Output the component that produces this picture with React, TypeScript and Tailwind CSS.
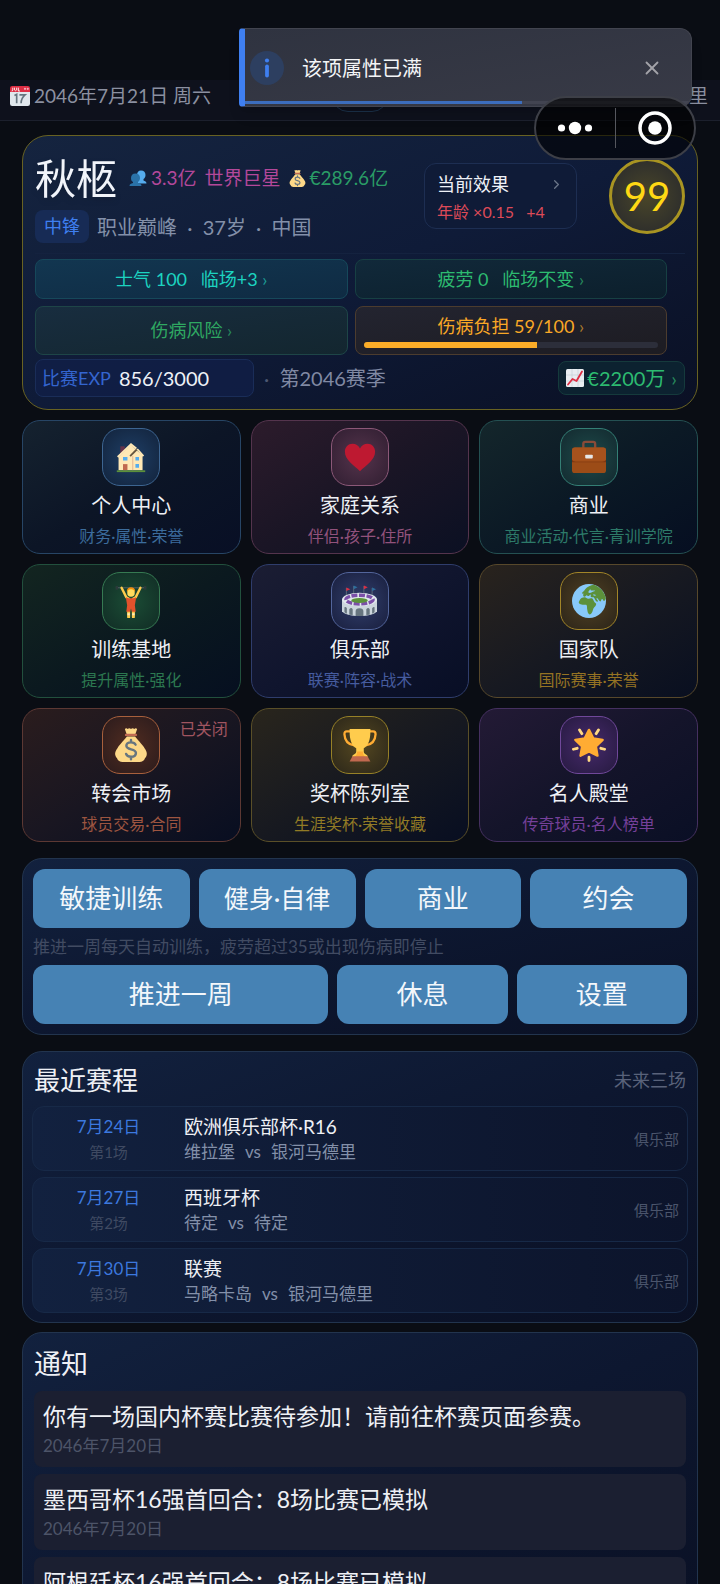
import { ReactNode } from 'react';
import { ChevronRight, X } from 'lucide-react';

function Calendar() {
  return (
    <svg viewBox="0 0 36 36" className="size-5 shrink-0" aria-hidden="true">
      <path fill="#e0e7ec" d="M36 32a4 4 0 0 1-4 4H4a4 4 0 0 1-4-4V9h36z" />
      <path fill="#dd2e44" d="M0 11V4a4 4 0 0 1 4-4h28a4 4 0 0 1 4 4v7z" />
      <circle cx="27" cy="5" r="2" fill="#f4abba" />
      <circle cx="32" cy="5" r="2" fill="#f4abba" />
      <path fill="none" stroke="#fff" strokeWidth="1.6" d="M5 3v4q0 2-2 2M8 3v4q2 3 4 0V3M15 3v6h3" />
      <path fill="none" stroke="#66757f" strokeWidth="3" d="M8 17l4-2v16M17 16h10q-7 6-7 15" />
    </svg>
  );
}

function People() {
  return (
    <svg viewBox="0 0 36 36" className="size-[18px] shrink-0" aria-hidden="true">
      <path fill="#55acee" d="M24 3c6 0 9 4 9 9 0 4-2 7-4 8v3c3 1 6 2 6 6H15c0-4 3-5 5-6v-3c-3-1-4-4-4-8 0-5 3-9 8-9z" />
      <path fill="#2a72a8" d="M13 9c6 0 9 4 9 9 0 4-2 6-4 8v2c4 1 7 2 7 6H1c0-4 3-5 7-6v-2c-3-2-4-4-4-8 0-5 3-9 9-9z" />
    </svg>
  );
}

function MoneyBag({ className }: { className: string }) {
  return (
    <svg viewBox="0 0 36 36" className={className} aria-hidden="true">
      <path fill="#fdd888" d="M31.9 20.6c-1.6-2.6-8-9.6-9.5-11.6H13.6c-1.5 2-7.900 9-9.500 11.600-1.600 2.600-3.600 5-2.600 8.400.5 1.700 1.200 2 1.700 3 1 2.600 3 4 6 4h17.600c3 0 5-1.400 6-4 .5-1 1.200-1.300 1.700-3 1-3.400-1-5.800-2.600-8.400z" />
      <path fill="#fdd888" d="M11.500 1q1.500-1.500 3 0 1.700-1.500 3.500 0 1.700-1.500 3.500 0 1.500-1.500 3 0L22.500 7h-9z" />
      <path fill="#bf6952" d="M13 6h10q1.500 0 1.500 1.300T23 8.600H13q-1.500 0-1.500-1.300T13 6z" />
      <path fill="none" stroke="#67757f" strokeWidth="2.600" strokeLinecap="round" d="M22.800 17.600c-.7-1.700-2.600-2.400-4.800-2.400-2.900 0-4.900 1.400-4.900 3.700 0 5 10.100 2.400 10.100 7.600 0 2.500-2.200 4-5.200 4-2.500 0-4.600-1-5.200-3M18 12.600v2.400M18 30.800V33" />
    </svg>
  );
}

function ChartUp() {
  return (
    <svg viewBox="0 0 36 36" className="size-[18px] shrink-0" aria-hidden="true">
      <rect width="36" height="36" rx="3" fill="#e8edf1" />
      <path fill="none" stroke="#b9c6cf" d="M0 12h36M0 24h36M12 0v36M24 0v36" />
      <path fill="none" stroke="#dd2e44" strokeWidth="3.600" strokeLinecap="round" strokeLinejoin="round" d="M4 31l9-11 8 4L32 5" />
    </svg>
  );
}

function House() {
  return (
    <svg viewBox="0 0 36 36" className="size-[32px]" aria-hidden="true">
      <path fill="#66334b" d="M6 6h5v9H6z" />
      <path fill="#ffe8b6" d="M4 18 18 4l6 6 7 6v17H4z" />
      <path fill="none" stroke="#d99e82" strokeWidth=".8" d="M20 17v16" />
      <path fill="none" stroke="#66553f" strokeWidth="2" d="m17 17 8-8" />
      <path fill="none" stroke="#ffe8b6" strokeWidth="2" d="m25 9 7 8M3 18 18 3.500l6 5" />
      <path fill="#55acee" d="M9 18h5v4H9zM23 18h4v4h-4zM23 26h4v4h-4z" />
      <path fill="#c1694f" d="M9 26h5v7H9z" />
      <path fill="#5c913b" d="M2 33h32v2H2z" />
    </svg>
  );
}

function Heart() {
  return (
    <svg viewBox="0 0 36 36" className="size-[34px]" aria-hidden="true">
      <path fill="#be1931" d="M34 12.500C34 7.500 30.500 4 26 4c-3.600 0-6.500 2-8 5-1.500-3-4.400-5-8-5-4.500 0-8 3.500-8 8.500C2 21 12 27.500 18 33c6-5.500 16-12 16-20.500z" />
    </svg>
  );
}

function Briefcase() {
  return (
    <svg viewBox="0 0 36 36" className="size-[34px]" aria-hidden="true">
      <path fill="none" stroke="#8a4b38" strokeWidth="2.500" d="M12 9V4q0-2 2-2h8.500q2 0 2 2v5" />
      <rect y="8" width="36" height="27" rx="3" fill="#9c4c17" />
      <path fill="#7c3510" d="M0 21q1 2 4 2h28q3 0 4-2v2.500H0z" />
      <path fill="#a6521d" d="M0 11q0-3 3-3h30q3 0 3 3v9q0 2-4 2H4q-4 0-4-2z" />
      <rect x="14" y="15.500" width="8" height="4" rx="1" fill="#e6e7e8" />
    </svg>
  );
}

function Lifter() {
  return (
    <svg viewBox="0 0 36 36" className="size-[34px]" aria-hidden="true">
      <path stroke="#566069" strokeWidth="1" d="M2 4h32" />
      <path stroke="#2b3a3a" strokeWidth="2.500" d="M3 2v4M33 2v4" />
      <path fill="none" stroke="#ffcc4d" strokeWidth="2.600" strokeLinecap="round" strokeLinejoin="round" d="m8 4 5 10 3 2M28 4l-5 10-3 2" />
      <path fill="#f4900c" d="M13.500 8c0-3 2-4.500 4.500-4.500s4.500 1.500 4.500 4.500z" />
      <circle cx="18" cy="9.500" r="4" fill="#ffdc5d" />
      <path fill="none" stroke="#ffcc4d" strokeWidth="3.200" strokeLinecap="round" d="M15.500 27v8M20.500 27v8" />
      <path fill="#e2522c" d="m12.500 14 3 1h5l3-1-1.500 9h-8zM14 22h8l1 7.500h-4L18 26l-1 3.500h-4z" />
      <path stroke="#ffe8b6" strokeWidth="2.600" d="M15.500 31v2M20.500 31v2" />
    </svg>
  );
}

function Stadium() {
  return (
    <svg viewBox="0 0 36 36" className="size-[35px]" aria-hidden="true">
      <path stroke="#66757f" strokeWidth=".8" d="M4.500 4v9M12 2v9M22.500 2v9M31 4v9" />
      <path fill="#dd2e44" d="m4.500 3.500 4 1.800-4 2zM22.500 1.500l4 1.800-4 2z" />
      <path fill="#2d6f9e" d="m12 1.500 4 1.800-4 2zM31 3.500l4 1.800-4 2z" />
      <path fill="#ccd6dd" d="M0 16v12c2 3 9 5 18 5s16-2 18-5V16z" />
      <ellipse cx="18" cy="16" rx="18" ry="7" fill="#e1e8ed" />
      <ellipse cx="18" cy="16" rx="14" ry="4.500" fill="none" stroke="#7b4fa8" strokeWidth="3.500" strokeDasharray="6 1.600" />
      <ellipse cx="18" cy="17" rx="8.500" ry="2.500" fill="#5c913b" />
      <path fill="#67757f" d="M14 33v-5q0-3 4-3t4 3v5zM7.500 31.500V26q2-2.500 3.500 0v6zM25 32v-6q2-2.500 3.500 0v5.500zM2.500 29v-5q1.500-1 2.500 1v5.500zM31 30.500V25q1.500-2 2.500-1v5z" />
    </svg>
  );
}

function Globe() {
  return (
    <svg viewBox="0 0 36 36" className="size-[34px]" aria-hidden="true">
      <circle cx="18" cy="18" r="18" fill="#88c9f9" />
      <path fill="#5c913b" d="M8 17.500c1-2.500 3-3.500 5.500-3.500 1.500 0 2 1.600 4 1.500 1.400 0 2.600-.8 4.400.2 1.200 1.800 1.200 3.500 3.600 5 .6 2.300-2.300 3.800-3.200 6.300-.6 2.300-1.600 5.200-3.600 5.300-2.200-.6-2.200-3.700-2.700-5.700-.2-1.600.3-3.600-1-4.600-2.200-.6-5.500.9-7.500-1.500-.6-.900-.2-2 .5-3zM10.500 10c.5-2 2.500-2.500 3.500-4.500C16 3 20 1 23 .8 30 3 34.500 9 35.800 15c-.3 1.500-1.500 3-2 3-1-.5-1-2-2-2-1.300.4-.5 2.500-1.800 2.500-1.800-.5-2-3-3.500-3.700-1 .2-.4 1.600.5 2.400 1 .8.500 1.400-.5 1.500-1.800-.5-2-3-3.300-4.500-1.200-.3-2.300.2-3.300-.6-.4-.8.5-1.800-.4-2.400-.9 0-.8 1.500-2 1.500-1 .2-1.200-1-2.200-.8-.9.600-1 1.500-2.200 1.500-1.500-.3-1.800-2.200-.6-3z" />
      <path fill="#88c9f9" d="M17 8.500c1-.5 1.300-2.500 2.500-3l.5 1.500c1.800 0 3-.5 4.500 0-.5 1.500-3 1-4 2-1 .7-2.500.8-3.500-.5zM22 11.500c1-.8 3-.5 3.500.5-1 .8-2.500.5-3.500-.5z" />
    </svg>
  );
}

function Trophy() {
  return (
    <svg viewBox="0 0 36 36" className="size-[34px]" aria-hidden="true">
      <path fill="none" stroke="#ffac33" strokeWidth="2.400" d="M9 3.500H4q-2.500 0-2.500 3Q2 17 12 18.500M27 3.500h5q2.500 0 2.500 3Q34 17 24 18.500" />
      <path fill="#ffcc4d" d="M7 1h22v3c0 9-2.500 15-7 17.500V25c0 3 4 3 4 5v1H10v-1c0-2 4-2 4-5v-3.500C9.500 19 7 13 7 4z" />
      <path fill="#ffac33" d="M15 25h6q0 4 3 6H12q3-2 3-6z" />
      <path fill="#c1694f" d="M10 30h16l3 5.500H7z" />
    </svg>
  );
}

function Star() {
  return (
    <svg viewBox="0 0 36 36" className="size-[34px]" aria-hidden="true">
      <path stroke="#ffd983" strokeWidth="3" strokeLinecap="round" d="m8 2 2.500 4M28 2l-2.500 4M1.500 22.500l4-1M34.500 22.500l-4-1M18 31v3.500" />
      <path fill="#ffac33" stroke="#ffac33" strokeWidth="2.500" strokeLinejoin="round" d="m18 2 4.500 9 10 1.500-7.200 7 1.700 9.800-9-4.600-9 4.600 1.700-9.800-7.200-7 10-1.500z" />
    </svg>
  );
}

type Module = {
  title: string;
  desc: string;
  icon: ReactNode;
  card: string;
  box: string;
  text: string;
  badge?: string;
};

const modules: Module[] = [
  {
    title: '个人中心', desc: '财务·属性·荣誉', icon: <House />,
    card: 'border-[#274565] from-[#15222f] via-[#0c1526] to-[#080f25]',
    box: 'border-[#3d6591] from-[#1f3f66] to-[#12233c]', text: 'text-[#3c6c9c]',
  },
  {
    title: '家庭关系', desc: '伴侣·孩子·住所', icon: <Heart />,
    card: 'border-[#54344d] from-[#2c1b2b] via-[#1a1525] to-[#0b1023]',
    box: 'border-[#8c5878] from-[#55344c] to-[#301e31]', text: 'text-[#92527c]',
  },
  {
    title: '商业', desc: '商业活动·代言·青训学院', icon: <Briefcase />,
    card: 'border-[#245052] from-[#14262b] via-[#0b1925] to-[#060e21]',
    box: 'border-[#347f75] from-[#1d4b4a] to-[#13292f]', text: 'text-[#2d7a69]',
  },
  {
    title: '训练基地', desc: '提升属性·强化', icon: <Lifter />,
    card: 'border-[#22503d] from-[#132520] via-[#0b191f] to-[#060f20]',
    box: 'border-[#367a52] from-[#1b4d35] to-[#112c25]', text: 'text-[#2c7850]',
  },
  {
    title: '俱乐部', desc: '联赛·阵容·战术', icon: <Stadium />,
    card: 'border-[#2f3d6c] from-[#1b1d33] via-[#10152e] to-[#080e25]',
    box: 'border-[#53659b] from-[#323f6d] to-[#191f3e]', text: 'text-[#465c9f]',
  },
  {
    title: '国家队', desc: '国际赛事·荣誉', icon: <Globe />,
    card: 'border-[#57482b] from-[#29231d] via-[#171921] to-[#090f20]',
    box: 'border-[#a28528] from-[#514122] to-[#2b2419]', text: 'text-[#957323]',
  },
  {
    title: '转会市场', desc: '球员交易·合同', icon: <MoneyBag className="size-[34px]" />, badge: '已关闭',
    card: 'border-[#5c3833] from-[#2a1c1d] via-[#191621] to-[#080e21]',
    box: 'border-[#a8603c] from-[#512c20] to-[#2b1b1c]', text: 'text-[#9d5540]',
  },
  {
    title: '奖杯陈列室', desc: '生涯奖杯·荣誉收藏', icon: <Trophy />,
    card: 'border-[#5a4f28] from-[#29251c] via-[#171920] to-[#080e21]',
    box: 'border-[#978127] from-[#554820] to-[#2b2619]', text: 'text-[#927b25]',
  },
  {
    title: '名人殿堂', desc: '传奇球员·名人榜单', icon: <Star />,
    card: 'border-[#453060] from-[#231a35] via-[#14142a] to-[#0a0f25]',
    box: 'border-[#70489a] from-[#472a6c] to-[#261a40]', text: 'text-[#75409a]',
  },
];

const matches = [
  { date: '7月24日', no: '第1场', cup: '欧洲俱乐部杯·R16', home: '维拉堡', away: '银河马德里' },
  { date: '7月27日', no: '第2场', cup: '西班牙杯', home: '待定', away: '待定' },
  { date: '7月30日', no: '第3场', cup: '联赛', home: '马略卡岛', away: '银河马德里' },
];

const notices = [
  { text: '你有一场国内杯赛比赛待参加！请前往杯赛页面参赛。', date: '2046年7月20日' },
  { text: '墨西哥杯16强首回合：8场比赛已模拟', date: '2046年7月20日' },
  { text: '阿根廷杯16强首回合：8场比赛已模拟', date: '2046年7月20日' },
];

const panel = 'rounded-[20px] border border-[#22344e] bg-linear-to-br from-[#12213e] via-[#0d1730] to-[#0a1024]';
const actionBtn = 'h-[59px] rounded-xl bg-[#4682b4] text-center text-[#f3f7fb]';

function Toast() {
  return (
    <div role="status" className="absolute top-7 right-7 left-[33.2%] z-20 flex h-[79px] items-center overflow-hidden rounded-l-[4px] rounded-r-xl border border-l-[6px] border-[#42444f] border-l-[#3f7ff0] bg-linear-to-br from-[#2f3340] to-[#383a46] shadow-lg">
      <span className="ml-[5px] grid size-[34px] place-items-center rounded-full bg-[#2d3f60]">
        <svg viewBox="0 0 12 24" className="h-5 w-[10px]" aria-hidden="true">
          <circle cx="6" cy="3" r="2.500" fill="#3f7ff0" />
          <path stroke="#3f7ff0" strokeWidth="4.500" strokeLinecap="round" d="M6 10v11" />
        </svg>
      </span>
      <p className="ml-[18px] flex-1 text-[20px] text-[#f4f5f7]">该项属性已满</p>
      <button type="button" aria-label="关闭" className="mr-7 text-[#a3a3a9]">
        <X size={22} strokeWidth={2} />
      </button>
      <div className="absolute inset-x-0 bottom-[2px] h-[3px] bg-[#424451]">
        <div className="h-full bg-[#3c6dbd]" style={{ width: '62%' }} />
      </div>
    </div>
  );
}

function Capsule() {
  return (
    <div className="absolute top-24 right-6 z-30 flex h-16 w-[162px] items-center rounded-full border-2 border-[#3d3f47] bg-black/60">
      <button type="button" aria-label="更多" className="grid h-full flex-1 place-items-center">
        <svg viewBox="0 0 36 14" className="h-[14px] w-9" fill="#fff" aria-hidden="true">
          <circle cx="4.500" cy="7" r="3.600" />
          <circle cx="18" cy="7" r="6.200" />
          <circle cx="31.500" cy="7" r="3.600" />
        </svg>
      </button>
      <span className="h-10 w-px bg-[#55575e]" />
      <button type="button" aria-label="退出" className="grid h-full flex-1 place-items-center">
        <svg viewBox="0 0 36 36" className="size-9" aria-hidden="true">
          <circle cx="18" cy="18" r="15" fill="none" stroke="#fff" strokeWidth="3.500" />
          <circle cx="18" cy="18" r="6.800" fill="#fff" />
        </svg>
      </button>
    </div>
  );
}

function PlayerCard() {
  return (
    <section className="rounded-[26px] border border-[#686222] bg-linear-to-br from-[#15243f] via-[#0f1b38] to-[#0a1024] p-3">
      <div className="flex items-center pb-[10px]">
        <div className="min-w-0 flex-1 whitespace-nowrap">
          <div className="flex h-15 items-center text-[19px]">
            <h1 className="mr-3 text-[41px] leading-none text-[#f1f4fa] drop-shadow-md">秋柩</h1>
            <People />
            <span className="ml-1 text-[#b3489a]">3.3亿</span>
            <span className="ml-2 text-[#b3489a]">世界巨星</span>
            <MoneyBag className="mr-1 ml-2 size-[17px] shrink-0" />
            <span className="text-[#2a9c66]">€289.6亿</span>
          </div>
          <div className="mt-[2px] flex h-[33px] items-center text-[20px] text-[#8390a9]">
            <span className="mr-2 flex h-full items-center rounded-lg bg-[#172b55] px-[9px] text-[18px] text-[#3f7ff0]">中锋</span>
            <span className="whitespace-pre">职业巅峰  ·  37岁  ·  中国</span>
          </div>
        </div>
        <button type="button" className="mr-8 h-[66px] w-[153px] rounded-xl border border-[#1d2e52] bg-[#0f1b37] px-3 text-left">
          <span className="flex h-8 items-end justify-between text-[18px] leading-6 text-[#eef1f7]">
            当前效果
            <ChevronRight size={15} className="mb-1 text-[#6b7689]" />
          </span>
          <span className="block text-[16px] leading-8 whitespace-pre text-[#dc4a58]">年龄 ×0.15   +4</span>
        </button>
        <div className="grid size-[76px] shrink-0 place-items-center rounded-full border-[3px] border-[#a89422] bg-radial from-[#4a4628] to-[#26272b] text-[40px] text-[#ffd814]">99</div>
      </div>

      <div className="border-t border-[#14223f] pt-[5px]">
        <div className="mr-[18px] grid grid-cols-2 gap-[7px] text-[18px]">
          <button type="button" className="flex h-10 items-center justify-center rounded-lg border border-[#16485a] bg-linear-to-br from-[#123650] to-[#0f2b43] whitespace-pre text-[#1cd3c0]">
            士气 100   临场+3 <span className="text-[#1d9c95]">›</span>
          </button>
          <button type="button" className="flex h-10 items-center justify-center rounded-lg border border-[#174043] bg-linear-to-br from-[#11293a] to-[#0c1f2c] whitespace-pre text-[#2dbb70]">
            疲劳 0   临场不变 <span className="text-[#278a5c]">›</span>
          </button>
          <button type="button" className="flex h-[49px] items-center justify-center rounded-lg border border-[#1e4547] bg-linear-to-br from-[#182d3f] to-[#13262f] whitespace-pre text-[#2fa862]">
            伤病风险 <span className="text-[#278a5c]">›</span>
          </button>
          <button type="button" className="flex h-[49px] flex-col justify-end rounded-lg border border-[#4c3c2e] bg-linear-to-br from-[#232430] to-[#1d1c22] px-2 pb-[6px] text-[#f9a826]">
            <span className="block text-center leading-8 whitespace-pre">伤病负担 59/100 <span className="text-[#ad7a2c]">›</span></span>
            <span className="block h-[6px] overflow-hidden rounded-full bg-[#2c2e3a]">
              <span className="block h-full bg-[#fbac28]" style={{ width: '59%' }} />
            </span>
          </button>
        </div>
        <div className="mt-1 flex h-[38px] items-center text-[18px]">
          <div className="flex h-full w-[219px] items-center rounded-lg border border-[#1a2d58] bg-[#11204a]/70 px-[6px]">
            <span className="text-[#3465cf]">比赛EXP</span>
            <span className="ml-2 text-[20px] text-[#eef1f7]">856/3000</span>
          </div>
          <span className="ml-[10px] text-[20px] whitespace-pre text-[#8089a3]"><span className="text-[#4d5872]">·</span>  第2046赛季</span>
          <button type="button" className="ml-auto flex h-[34px] items-center rounded-lg border border-[#153a3c] bg-[#0c2230] px-[7px] text-[20px] whitespace-pre text-[#2dbb70]">
            <ChartUp />
            <span className="ml-[3px]">€2200万</span>
            <span className="ml-[6px] text-[#278a5c]">›</span>
          </button>
        </div>
      </div>
    </section>
  );
}

function ModuleGrid() {
  return (
    <nav className="mt-[10px] grid grid-cols-3 gap-[10px]">
      {modules.map(m => (
        <button
          key={m.title}
          type="button"
          className={`relative flex h-[134px] flex-col items-center rounded-[18px] border bg-linear-to-br pt-[7px] ${m.card}`}
        >
          <span className={`grid size-[58px] place-items-center rounded-[18px] border bg-radial ${m.box}`}>{m.icon}</span>
          <span className="mt-1 text-[20px] leading-[30px] text-[#eef0f5]">{m.title}</span>
          <span className={`mt-1 text-[16px] leading-6 ${m.text}`}>{m.desc}</span>
          {m.badge && <span className="absolute top-2 right-3 text-[16px] leading-6 text-[#a05560]">{m.badge}</span>}
        </button>
      ))}
    </nav>
  );
}

function Actions() {
  return (
    <section className={`mt-4 px-[10px] py-[10px] ${panel}`}>
      <div className="grid grid-cols-4 gap-[9px]">
        <button type="button" className={`${actionBtn} text-[26px]`}>敏捷训练</button>
        <button type="button" className={`${actionBtn} text-[25px]`}>健身·自律</button>
        <button type="button" className={`${actionBtn} text-[26px]`}>商业</button>
        <button type="button" className={`${actionBtn} text-[26px]`}>约会</button>
      </div>
      <p className="text-[17px] leading-[37px] text-[#414b62]">推进一周每天自动训练，疲劳超过35或出现伤病即停止</p>
      <div className="grid grid-cols-[26fr_15fr_15fr] gap-[9px] text-[26px]">
        <button type="button" className={actionBtn}>推进一周</button>
        <button type="button" className={actionBtn}>休息</button>
        <button type="button" className={actionBtn}>设置</button>
      </div>
    </section>
  );
}

function Schedule() {
  return (
    <section className={`mt-4 px-[9px] pb-[9px] ${panel}`}>
      <div className="flex h-[54px] items-center justify-between px-[2px] pt-[2px]">
        <h2 className="text-[26px] text-[#eef0f5]">最近赛程</h2>
        <span className="text-[18px] text-[#59627a]">未来三场</span>
      </div>
      <ul className="flex flex-col gap-[6px]">
        {matches.map(m => (
          <li key={m.date} className="flex h-[65px] items-center rounded-xl border border-[#172947] bg-linear-to-r from-[#12213f] to-[#0c142b] pr-2 leading-[26px]">
            <div className="w-[151px] text-center">
              <div className="text-[17px] text-[#3c78df]">{m.date}</div>
              <div className="text-[15px] leading-6 text-[#3f4a62]">{m.no}</div>
            </div>
            <div className="flex-1">
              <div className="text-[19px] text-[#eef0f5]">{m.cup}</div>
              <div className="text-[17px] leading-6 text-[#8390a9]">
                {m.home}<span className="mx-[10px]">vs</span>{m.away}
              </div>
            </div>
            <span className="text-[15px] text-[#4b556c]">俱乐部</span>
          </li>
        ))}
      </ul>
    </section>
  );
}

function Notices() {
  return (
    <section className={`mt-[9px] px-[11px] pb-[11px] ${panel}`}>
      <h2 className="h-[58px] pt-1 text-[27px] leading-[54px] text-[#eef0f5]">通知</h2>
      <ul className="flex flex-col gap-[7px]">
        {notices.map(n => (
          <li key={n.text} className="h-19 rounded-lg bg-[#1b1f31] px-[9px] pt-2">
            <div className="text-[23px] leading-[34px] text-[#eef0f5]">{n.text}</div>
            <div className="text-[17px] leading-[26px] text-[#4d5468]">{n.date}</div>
          </li>
        ))}
      </ul>
    </section>
  );
}

export default function App() {
  return (
    <div className="relative h-screen overflow-hidden bg-[#0a0d14] font-[Lato,'Noto_Sans_CJK_SC',sans-serif]">
      <Toast />
      <Capsule />
      <div className="h-20" />
      <header className="relative flex h-[41px] items-center justify-between border-b border-[#1c202d] bg-[#0e111c] pr-3 pb-2 pl-[10px] text-[19px] text-[#8b90a0]">
        <span className="flex items-center gap-1">
          <Calendar />
          <time dateTime="2046-07-21">2046年7月21日 周六</time>
        </span>
        <span className="absolute top-0 left-1/2 h-8 w-14 -translate-x-1/2 rounded-full border border-[#1b3048]" />
        <span>银河马德里</span>
      </header>
      <main className="px-[22px] pt-[14px]">
        <PlayerCard />
        <ModuleGrid />
        <Actions />
        <Schedule />
        <Notices />
      </main>
    </div>
  );
}
